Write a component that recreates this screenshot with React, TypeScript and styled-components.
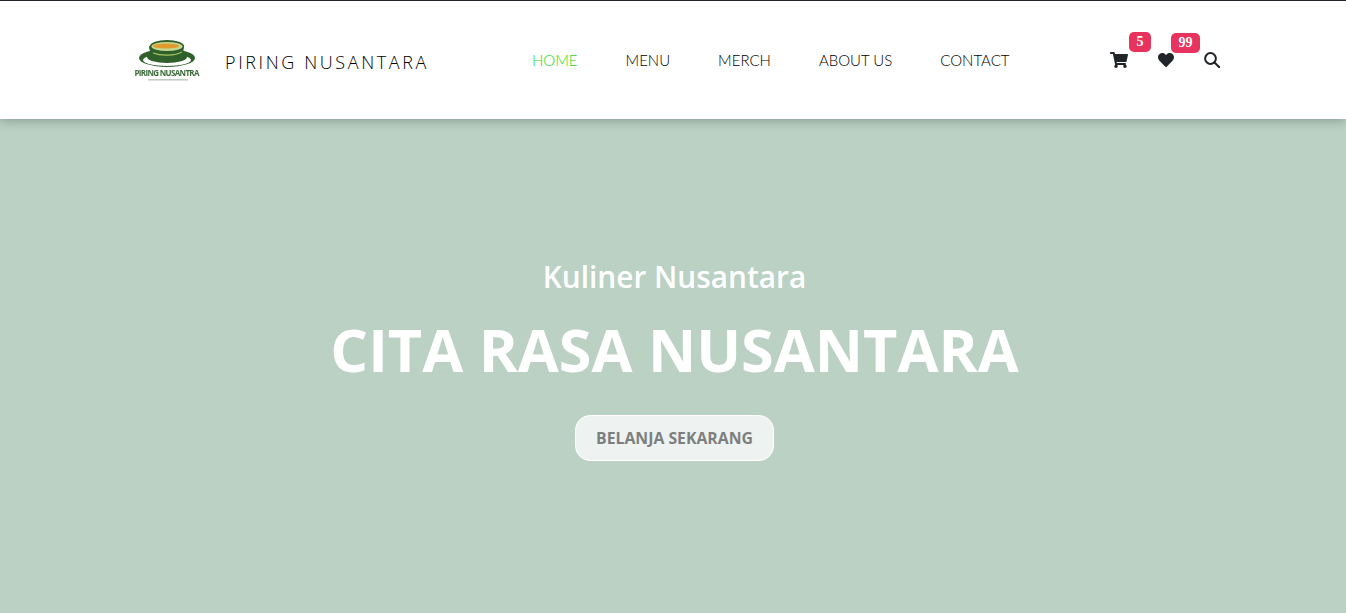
import React from 'react';
import styled, { createGlobalStyle } from 'styled-components';
import { FaShoppingCart, FaHeart } from 'react-icons/fa';

const GlobalStyle = createGlobalStyle`
  html, body {
    margin: 0;
    padding: 0;
    background: #fff;
    overflow: hidden;
  }
`;

const Page = styled.div`
  height: 613px;
  display: flex;
  flex-direction: column;
  font-family: 'Open Sans', 'Liberation Sans', sans-serif;
`;

const Header = styled.header`
  position: relative;
  z-index: 2;
  height: 118px;
  flex: none;
  border-top: 1px solid #212529;
  background: #fff;
  box-shadow: 0 2px 10px rgba(0, 0, 0, 0.25);
  display: flex;
  align-items: center;
  padding: 0 126px 0 135px;
`;

const Brand = styled.a`
  display: flex;
  align-items: center;
  gap: 26px;
  width: 397px;
  flex: none;
`;

const BrandName = styled.span`
  font-size: 18px;
  font-weight: 300;
  letter-spacing: 2.6px;
  color: #000;
  margin: 3px 0 0 -1px;
  white-space: nowrap;
`;

const Nav = styled.nav`
  display: flex;
  gap: 48px;
  flex: 1;
`;

const NavLink = styled.a<{ $active?: boolean }>`
  font-family: 'Lato', 'Open Sans', sans-serif;
  font-size: 15px;
  font-weight: 300;
  line-height: 20px;
  color: ${(p) => (p.$active ? '#22dd22' : '#000')};
  white-space: nowrap;
`;

const Icons = styled.div`
  display: flex;
  align-items: center;
  gap: 30px;
  color: #212529;
`;

const IconLink = styled.a`
  position: relative;
  display: flex;
`;

const Badge = styled.span<{ $left: number }>`
  position: absolute;
  top: -19px;
  left: ${(p) => p.$left}px;
  height: 20px;
  min-width: 22px;
  box-sizing: border-box;
  padding: 0 7.5px;
  border-radius: 5px;
  background: #e8335f;
  color: #fff;
  font-family: 'Liberation Serif', serif;
  font-size: 14px;
  font-weight: 700;
  line-height: 20px;
  text-align: center;
`;

const Hero = styled.main`
  flex: 1;
  background: #bad1c4;
  display: flex;
  flex-direction: column;
  align-items: center;
  padding: 138px 0 0 3px;
  color: #fff;
`;

const Kicker = styled.h2`
  margin: 0;
  font-size: 29.8px;
  font-weight: 600;
  line-height: 40px;
`;

const Title = styled.h1`
  margin: 16px 0 0;
  font-size: 59.4px;
  font-weight: 700;
  line-height: 72px;
  white-space: nowrap;
`;

const ShopButton = styled.a`
  margin-top: 30px;
  box-sizing: border-box;
  width: 199px;
  height: 46px;
  border: 1px solid #fff;
  border-radius: 15px;
  background: #eef3f2;
  color: #7d7f7e;
  font-size: 15.8px;
  font-weight: 700;
  line-height: 44px;
  text-align: center;
  white-space: nowrap;
`;

const LogoMark = styled.svg`
  flex: none;
  filter: blur(0.3px);
`;

const Logo = () => (
  <LogoMark width="65" height="43" viewBox="0 0 65 43" aria-label="Piring Nusantara">
    <ellipse cx="32" cy="19" rx="28" ry="9" fill="#2f5f2a" />
    <ellipse cx="32" cy="21" rx="24" ry="6" fill="#fff" />
    <ellipse cx="32" cy="18" rx="20" ry="6" fill="#2f5f2a" />
    <path d="M14 7 C14 15 20 20 32 20 C44 20 49 15 49 7 Z" fill="#2f5f2a" />
    <ellipse cx="32" cy="7" rx="17" ry="6" fill="#2f5f2a" />
    <ellipse cx="32" cy="7.5" rx="15.5" ry="4.6" fill="#c5d68f" />
    <ellipse cx="31" cy="7" rx="13" ry="2.6" fill="#e09a2e" />
    <path d="M18 14 C26 17 40 17 47 13" stroke="#a9c45f" strokeWidth="1.2" fill="none" />
    <text x="-0.5" y="37" fontFamily="'Open Sans', sans-serif" fontSize="8" fontWeight="700" fill="#3d6b3a" textLength="65">
      PIRING NUSANTRA
    </text>
    <rect x="13" y="40" width="40" height="1.6" fill="#c3ccc3" />
  </LogoMark>
);

const SearchIcon = () => (
  <svg width="16" height="16" viewBox="0 0 16 16" fill="none" stroke="currentColor" strokeWidth="2">
    <circle cx="6.5" cy="6.5" r="5.4" />
    <path d="M10.5 10.5 L15.3 15.3" strokeLinecap="round" />
  </svg>
);

const App = () => {
  return (
    <Page>
      <GlobalStyle />
      <Header>
        <Brand>
          <Logo />
          <BrandName>PIRING NUSANTARA</BrandName>
        </Brand>
        <Nav>
          <NavLink $active>HOME</NavLink>
          <NavLink>MENU</NavLink>
          <NavLink>MERCH</NavLink>
          <NavLink>ABOUT US</NavLink>
          <NavLink>CONTACT</NavLink>
        </Nav>
        <Icons>
          <IconLink>
            <FaShoppingCart size={18} />
            <Badge $left={19}>5</Badge>
          </IconLink>
          <IconLink>
            <FaHeart size={16} />
            <Badge $left={13}>99</Badge>
          </IconLink>
          <IconLink>
            <SearchIcon />
          </IconLink>
        </Icons>
      </Header>
      <Hero>
        <Kicker>Kuliner Nusantara</Kicker>
        <Title>CITA RASA NUSANTARA</Title>
        <ShopButton>BELANJA SEKARANG</ShopButton>
      </Hero>
    </Page>
  );
};

export default App;
